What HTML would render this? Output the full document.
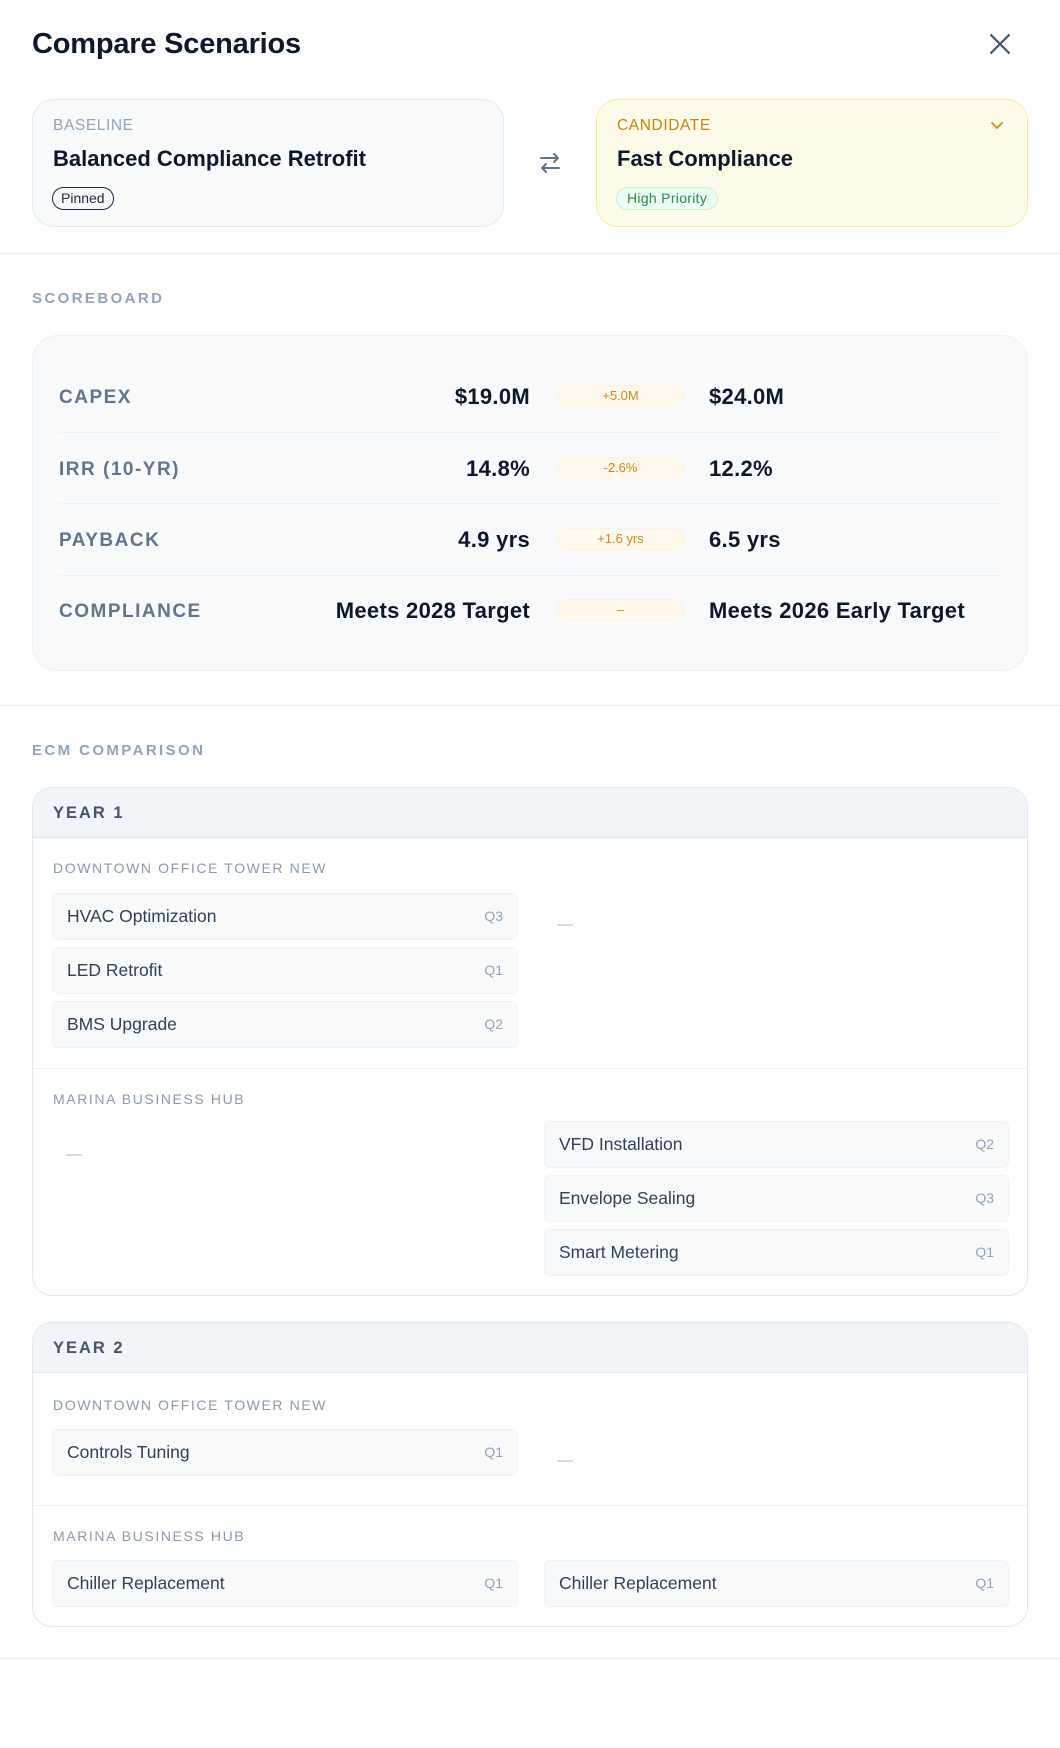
<!DOCTYPE html>
<html><head><meta charset="utf-8"><style>
*{box-sizing:border-box;margin:0;padding:0}
body{width:1060px;height:1748px;background:#fff;font-family:"Liberation Sans",sans-serif;position:relative;overflow:hidden;color:#0f172a}
.a{position:absolute}
.title{left:32px;top:28px;font-size:29px;font-weight:700;letter-spacing:-0.2px}
.card{border-radius:22px;border:1px solid #e2e8f0}
.lbl{font-size:15.5px;letter-spacing:0.6px}
.name{font-size:22px;font-weight:700;color:#0f172a}
.hr{height:1px;background:#e9edf2;left:0;width:1060px}
.sec{font-size:15px;font-weight:700;letter-spacing:2.4px;color:#94a3b8}
.rowl{left:59px;font-size:19px;font-weight:700;letter-spacing:1.5px;color:#64748b}
.bv{right:530px;font-size:22px;font-weight:700;text-align:right;white-space:nowrap;letter-spacing:0.3px}
.cv{left:709px;font-size:22px;font-weight:700;white-space:nowrap;letter-spacing:0.3px}
.dp{left:557px;width:127px;height:22px;border-radius:11px;background:#fef9ec;border:1px solid #fdf3dc;font-size:13px;color:#d08a1f;text-align:center;line-height:20px}
.rd{left:59px;width:941px;height:1px;background:#edf0f4}
.yc{left:32px;width:996px;border:1px solid #e2e8f0;border-radius:20px;overflow:hidden;background:#fff}
.yh{position:absolute;left:0;top:0;width:100%;height:50px;background:#f1f5f9;border-bottom:1px solid #e2e8f0;font-size:16.5px;font-weight:700;letter-spacing:2px;color:#475569;padding-left:20px;line-height:50px}
.bl{position:absolute;left:20px;font-size:14px;letter-spacing:1.6px;color:#8d99ab}
.it{position:absolute;height:47px;background:#f8fafc;border:1px solid #f1f4f7;border-radius:6px;font-size:17.5px;color:#334155;padding:0 14px;line-height:45px}
.it span{position:absolute;right:14px;top:0;font-size:14px;color:#94a3b8}
.L{left:19px;width:466px}.R{left:511px;width:465px}
.dash{position:absolute;width:16px;height:2px;background:#d5dbe3}
.sd{position:absolute;left:0;width:100%;height:1px;background:#eef1f5}
</style></head><body>
<div class="a title">Compare Scenarios</div>
<svg class="a" style="left:988px;top:32px" width="24" height="24" viewBox="0 0 24 24"><path d="M3 3L21 21M21 3L3 21" stroke="#475569" stroke-width="2.2" stroke-linecap="round"/></svg>

<div class="a card" style="left:32px;top:99px;width:472px;height:128px;background:#f8fafc">
 <div class="a lbl" style="left:20px;top:17px;color:#94a3b8">BASELINE</div>
 <div class="a name" style="left:20px;top:46px">Balanced Compliance Retrofit</div>
 <div class="a" style="left:19px;top:87px;height:23px;padding:0 8px;border:1.3px solid #1e293b;border-radius:12px;font-size:14px;line-height:20px;color:#1e293b">Pinned</div>
</div>
<svg class="a" style="left:538px;top:150px" width="24" height="26" viewBox="0 0 24 26"><path d="M3 8H20M16 4L20 8L16 12M21 18H4M8 14L4 18L8 22" stroke="#64748b" stroke-width="2" fill="none" stroke-linecap="round" stroke-linejoin="round"/></svg>
<div class="a card" style="left:596px;top:99px;width:432px;height:128px;background:#fefce8;border-color:#fbe6a0">
 <div class="a lbl" style="left:20px;top:17px;color:#c98214">CANDIDATE</div>
 <svg class="a" style="left:393px;top:21px" width="14" height="10" viewBox="0 0 14 10"><path d="M2 2L7 7L12 2" stroke="#d08a1f" stroke-width="1.8" fill="none" stroke-linecap="round"/></svg>
 <div class="a name" style="left:20px;top:46px">Fast Compliance</div>
 <div class="a" style="left:19px;top:87px;height:23px;padding:0 10px;background:#ecfdf3;border:1px solid #cdeed9;border-radius:12px;font-size:14px;line-height:21px;color:#2f8a4c;letter-spacing:0.3px">High Priority</div>
</div>
<div class="a hr" style="top:253px"></div>

<div class="a sec" style="left:32px;top:290px">SCOREBOARD</div>
<div class="a" style="left:32px;top:335px;width:996px;height:336px;background:#f8fafc;border:1px solid #eef1f5;border-radius:26px"></div>
<div class="a rowl" style="top:387px">CAPEX</div><div class="a bv" style="top:384px">$19.0M</div><div class="a dp" style="top:385px">+5.0M</div><div class="a cv" style="top:384px">$24.0M</div>
<div class="a rd" style="top:432px"></div>
<div class="a rowl" style="top:459px">IRR (10-YR)</div><div class="a bv" style="top:456px">14.8%</div><div class="a dp" style="top:457px">-2.6%</div><div class="a cv" style="top:456px">12.2%</div>
<div class="a rd" style="top:503px"></div>
<div class="a rowl" style="top:530px">PAYBACK</div><div class="a bv" style="top:527px">4.9 yrs</div><div class="a dp" style="top:528px">+1.6 yrs</div><div class="a cv" style="top:527px">6.5 yrs</div>
<div class="a rd" style="top:575px"></div>
<div class="a rowl" style="top:601px">COMPLIANCE</div><div class="a bv" style="top:598px">Meets 2028 Target</div><div class="a dp" style="top:599px">–</div><div class="a cv" style="top:598px">Meets 2026 Early Target</div>
<div class="a hr" style="top:705px"></div>

<div class="a sec" style="left:32px;top:742px">ECM COMPARISON</div>
<div class="a yc" style="top:787px;height:509px">
 <div class="yh">YEAR 1</div>
 <div class="bl" style="top:72px">DOWNTOWN OFFICE TOWER NEW</div>
 <div class="it L" style="top:105px">HVAC Optimization<span>Q3</span></div>
 <div class="it L" style="top:159px">LED Retrofit<span>Q1</span></div>
 <div class="it L" style="top:213px">BMS Upgrade<span>Q2</span></div>
 <div class="dash" style="left:524px;top:136px"></div>
 <div class="sd" style="top:280px"></div>
 <div class="bl" style="top:303px">MARINA BUSINESS HUB</div>
 <div class="dash" style="left:33px;top:366px"></div>
 <div class="it R" style="top:333px">VFD Installation<span>Q2</span></div>
 <div class="it R" style="top:387px">Envelope Sealing<span>Q3</span></div>
 <div class="it R" style="top:441px">Smart Metering<span>Q1</span></div>
</div>
<div class="a yc" style="top:1322px;height:305px">
 <div class="yh">YEAR 2</div>
 <div class="bl" style="top:74px">DOWNTOWN OFFICE TOWER NEW</div>
 <div class="it L" style="top:106px">Controls Tuning<span>Q1</span></div>
 <div class="dash" style="left:524px;top:137px"></div>
 <div class="sd" style="top:182px"></div>
 <div class="bl" style="top:205px">MARINA BUSINESS HUB</div>
 <div class="it L" style="top:237px">Chiller Replacement<span>Q1</span></div>
 <div class="it R" style="top:237px">Chiller Replacement<span>Q1</span></div>
</div>
<div class="a hr" style="top:1658px"></div>
</body></html>
